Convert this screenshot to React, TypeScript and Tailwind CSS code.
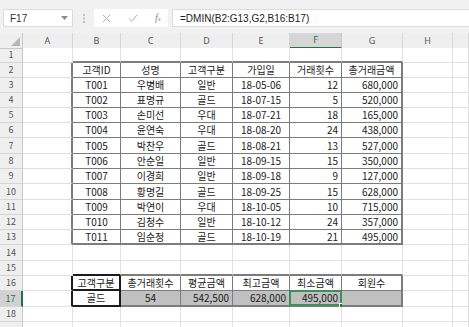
import React from "react";

type Kind = "grid" | "thin" | "thick" | "black";

const RIGHT: Record<Kind, string> = {
  grid: "border-r border-r-[#e0e0e0]",
  thin: "border-r border-r-[#7c7c7c]",
  thick: "border-r-2 border-r-[#7c7c7c]",
  black: "border-r-2 border-r-[#1c1c1c]",
};

const BOTTOM: Record<Kind, string> = {
  grid: "border-b border-b-[#e0e0e0]",
  thin: "border-b border-b-[#7c7c7c]",
  thick: "border-b-2 border-b-[#7c7c7c]",
  black: "border-b-2 border-b-[#1c1c1c]",
};

const letters = ["A", "B", "C", "D", "E", "F", "G", "H", ""];

const customers = [
  ["T001", "우병배", "일반", "18-05-06", "12", "680,000"],
  ["T002", "표명규", "골드", "18-07-15", "5", "520,000"],
  ["T003", "손미선", "우대", "18-07-21", "18", "165,000"],
  ["T004", "윤연숙", "우대", "18-08-20", "24", "438,000"],
  ["T005", "박찬우", "골드", "18-08-21", "13", "527,000"],
  ["T006", "안순일", "일반", "18-09-15", "15", "350,000"],
  ["T007", "이경희", "일반", "18-09-18", "9", "127,000"],
  ["T008", "황명길", "골드", "18-09-25", "15", "628,000"],
  ["T009", "박연이", "우대", "18-10-05", "10", "715,000"],
  ["T010", "김청수", "일반", "18-10-12", "24", "357,000"],
  ["T011", "임순정", "골드", "18-10-19", "21", "495,000"],
];

// row number -> cells for columns B..G
const content: Record<number, string[]> = {
  2: ["고객ID", "성명", "고객구분", "가입일", "거래횟수", "총거래금액"],
  16: ["고객구분", "총거래횟수", "평균금액", "최고금액", "최소금액", "회원수"],
  17: ["골드", "54", "542,500", "628,000", "495,000", ""],
};
customers.forEach((c, i) => (content[i + 3] = c));

const tallRows = [7, 10, 14, 17];

function rightKind(r: number, c: number): Kind {
  if (r >= 2 && r <= 13) {
    if (c === 0 || c === 6) return "thick";
    if (c >= 1 && c <= 5) return "thin";
  }
  if (r === 16 || r === 17) {
    if (c === 0 || c === 1) return "black";
    if (c >= 2 && c <= 5) return "thin";
    if (c === 6) return "thick";
  }
  return "grid";
}

function bottomKind(r: number, c: number): Kind {
  if (c === 1 && r >= 15 && r <= 17) return "black";
  if (c >= 1 && c <= 6) {
    if (r === 1 || r === 13) return "thick";
    if (r >= 2 && r <= 12) return "thin";
    if (r === 15 || r === 17) return "thick";
    if (r === 16) return "thin";
  }
  return "grid";
}

function align(r: number, c: number) {
  if (r === 2 || r === 16) return "justify-center";
  if (r >= 3 && r <= 13) return c >= 5 ? "justify-end pr-[3px]" : "justify-center";
  if (r === 17) return c <= 2 ? "justify-center" : "justify-end pr-[3px]";
  return "justify-center";
}

function Cell({ r, c }: { r: number; c: number }) {
  const text = c >= 1 && c <= 6 ? content[r]?.[c - 1] : undefined;
  const filled = r === 17 && c >= 2 && c <= 6;
  const selected = r === 17 && c === 5;
  return (
    <div
      className={`relative flex items-center ${align(r, c)} ${RIGHT[rightKind(r, c)]} ${BOTTOM[bottomKind(r, c)]} ${
        filled ? "bg-[#c0c0c0]" : "bg-white"
      }`}
    >
      {text && <span className="leading-none whitespace-nowrap">{text}</span>}
      {selected && (
        <div className="absolute -left-px -top-px -right-px -bottom-px border-2 border-[#3f8f58]">
          <div className="absolute -right-[4px] -bottom-[4px] w-[5px] h-[5px] bg-[#217346] border border-white" />
        </div>
      )}
    </div>
  );
}

function RowHeader({ r }: { r: number }) {
  const active = r === 17;
  return (
    <div
      className={`flex items-center justify-center text-[9px] border-b border-b-[#d4d4d4] ${
        active
          ? "bg-[#d2d2d2] text-[#217346] border-r-2 border-r-[#217346]"
          : "bg-[#efefef] text-[#555] border-r border-r-[#c8c8c8]"
      }`}
    >
      {r < 19 ? r : ""}
    </div>
  );
}

export default function App() {
  const rows = Array.from({ length: 19 }, (_, i) => i + 1);
  return (
    <div className="w-[469px] h-[327px] overflow-hidden bg-white text-[#1a1a1a] font-['Noto_Sans_CJK_KR',sans-serif] text-[10px]">
      {/* formula bar */}
      <div className="h-[33px] bg-[#f1f1f1] flex items-start pt-[9px] pl-[3px] font-['Liberation_Sans',sans-serif] text-[10px]">
        <div className="w-[70px] h-[18px] bg-white border border-[#dcdcdc] flex items-center justify-between pl-[6px] pr-[4px] text-[#333]">
          <span>F17</span>
          <svg width="7" height="4" viewBox="0 0 7 4">
            <path d="M0 0h7L3.5 4z" fill="#8a8a8a" />
          </svg>
        </div>
        <div className="w-[21px] h-[18px] flex items-center justify-center">
          <svg width="2" height="9" viewBox="0 0 2 9">
            <rect x="0" y="0" width="2" height="2" fill="#c4c4c4" />
            <rect x="0" y="3.5" width="2" height="2" fill="#c4c4c4" />
            <rect x="0" y="7" width="2" height="2" fill="#c4c4c4" />
          </svg>
        </div>
        <div className="w-[74px] h-[18px] bg-white flex items-center pl-[8px] gap-[17px]">
          <svg width="9" height="9" viewBox="0 0 9 9">
            <path d="M1 1l7 7M8 1l-7 7" stroke="#b0b0b0" strokeWidth="1" />
          </svg>
          <svg width="10" height="8" viewBox="0 0 10 8">
            <path d="M1 4.5l2.8 2.6L9 1" stroke="#b0b0b0" strokeWidth="1" fill="none" />
          </svg>
          <span className="italic font-['Liberation_Serif',serif] text-[10px] text-[#8a8a8a] leading-none">
            f<span className="text-[7px]">x</span>
          </span>
        </div>
        <div className="ml-[4px] flex-1 h-[18px] bg-white border border-[#dcdcdc] border-r-0 flex items-center pl-[7px] text-[#222]">
          =DMIN(B2:G13,G2,B16:B17)
        </div>
      </div>

      {/* column headers */}
      <div className="grid grid-cols-[23px_50px_48px_60px_52px_57px_52px_61px_50px_1fr] h-[15px] font-['Noto_Sans',sans-serif] text-[9px] text-[#555]">
        <div className="relative bg-[#efefef] border-r border-r-[#c8c8c8] border-b border-b-[#c8c8c8]">
          <svg className="absolute right-[2px] bottom-[2px]" width="9" height="9" viewBox="0 0 9 9">
            <path d="M9 0V9H0z" fill="#b8b8b8" />
          </svg>
        </div>
        {letters.map((l, i) =>
          i === 5 ? (
            <div
              key={i}
              className="flex items-center justify-center bg-[#d6d6d6] text-[#217346] border-r border-r-[#c8c8c8] border-b-2 border-b-[#217346]"
            >
              {l}
            </div>
          ) : (
            <div
              key={i}
              className="flex items-center justify-center bg-[#efefef] border-r border-r-[#d6d6d6] border-b border-b-[#c8c8c8]"
            >
              {l}
            </div>
          )
        )}
      </div>

      {/* sheet rows */}
      {rows.map((r) => (
        <div
          key={r}
          className={`grid grid-cols-[23px_50px_48px_60px_52px_57px_52px_61px_50px_1fr] ${
            tallRows.includes(r) ? "h-[16px]" : "h-[15px]"
          }`}
        >
          <RowHeader r={r} />
          {Array.from({ length: 9 }, (_, c) => (
            <Cell key={c} r={r} c={c} />
          ))}
        </div>
      ))}
    </div>
  );
}
